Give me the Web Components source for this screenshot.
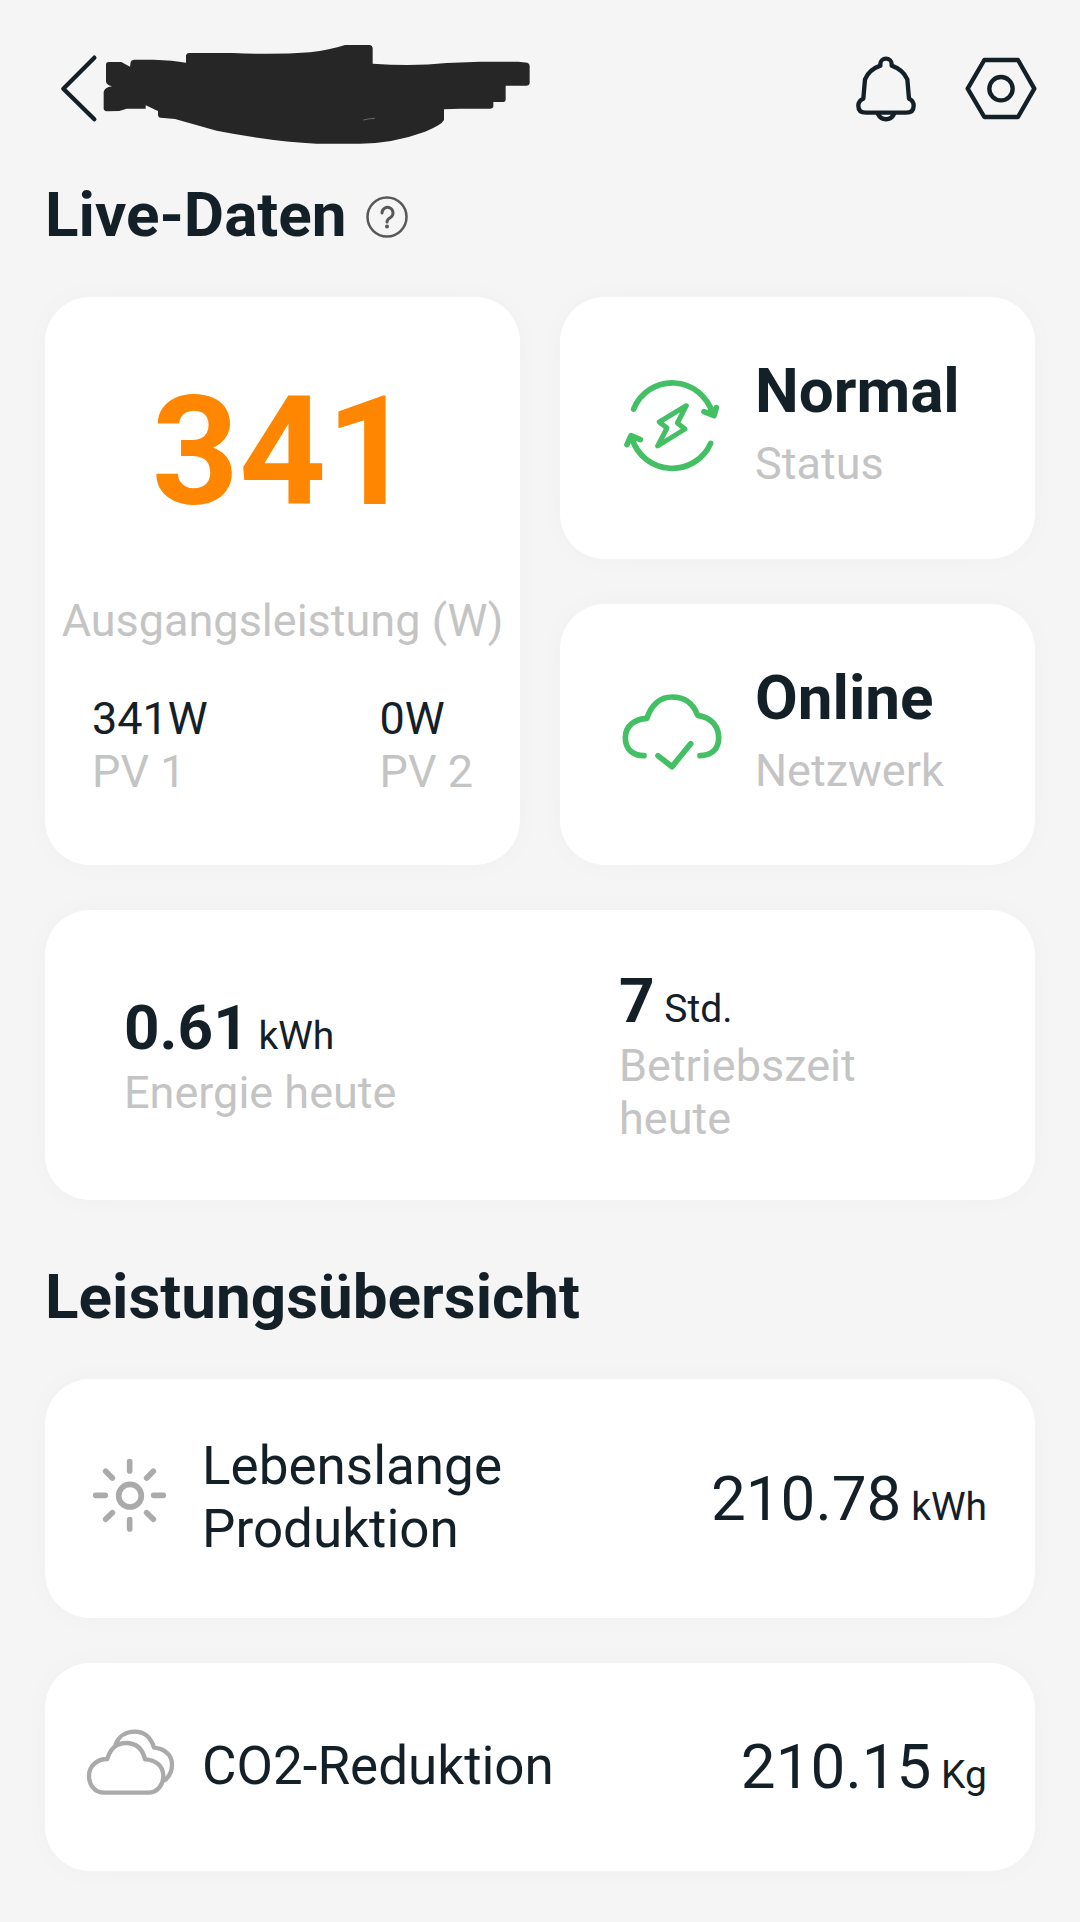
<!DOCTYPE html>
<html lang="de">
<head>
<meta charset="utf-8">
<meta name="viewport" content="width=device-width, initial-scale=1">
<title>Live-Daten</title>
<style>
  :root {
    --bg: #f5f5f5;
    --ink: #142027;
    --muted: #c4c4c4;
    --accent: #fe8600;
    --ok: #43bf64;
    --icon: #aaaaaa;
  }
  body {
    margin: 0;
    background: var(--bg);
    color: var(--ink);
    font-family: Roboto, "Liberation Sans", sans-serif;
  }
</style>
</head>
<body>
<solar-page></solar-page>

<template id="solar-page">
  <style>
    :host { display: block; padding-bottom: 50px; }
    main { display: flex; flex-direction: column; padding: 0 45px; }
    .live { display: grid; grid-template-columns: 1fr 1fr; gap: 45px 40px; margin-top: 46px; }
    .side { display: flex; flex-direction: column; gap: 45px; }
    .side > * { flex: 1; }
    .today { grid-column: 1 / -1; }
    .halves { display: grid; grid-template-columns: 1fr 1fr; align-items: center; padding: 54px 0 55px; }
    .halves > * { padding: 0 79px; }
    .overview { display: flex; flex-direction: column; gap: 45px; margin-top: 46px; }
    .second { margin-top: 60px; }
  </style>
  <app-header></app-header>
  <main>
    <section-title help>Live-Daten</section-title>
    <div class="live">
      <power-card value="341" label="Ausgangsleistung (W)">
        <pv-input value="341W" label="PV 1"></pv-input>
        <pv-input value="0W" label="PV 2"></pv-input>
      </power-card>
      <div class="side">
        <status-card icon="cycle" value="Normal" label="Status"></status-card>
        <status-card icon="online" value="Online" label="Netzwerk"></status-card>
      </div>
      <ui-card class="today">
        <div class="halves">
          <day-stat value="0.61" unit="kWh" label="Energie heute"></day-stat>
          <day-stat value="7" unit="Std." label="Betriebszeit heute"></day-stat>
        </div>
      </ui-card>
    </div>
    <section-title class="second">Leistungsübersicht</section-title>
    <div class="overview">
      <overview-row icon="sun" value="210.78" unit="kWh">Lebenslange Produktion</overview-row>
      <overview-row icon="clouds" value="210.15" unit="Kg">CO2-Reduktion</overview-row>
    </div>
  </main>
</template>

<script>
  const ICONS = {
    back: ['54 69 120 216', 13, '<path d="M163 83L70 176l93 92"/>'],
    bell: ['90 69 216 216', 13,
      '<path d="M181 107v-5a17 16 0 0 1 34 0v5Q249 119 262 148L267 206Q281 212 281 227Q281 248 258 248H138Q115 248 115 227Q115 212 130 206L135 148Q147 119 181 107"/><path d="M174 252C184 273 212 273 222 252"/>'],
    settings: ['436 69 216 216', 13,
      '<path d="M494 90H595L644 176L595 261H494L444 176Z"/><circle cx="544" cy="176" r="35"/>'],
    help: ['0 0 42 42', 3,
      '<circle cx="21" cy="21" r="19.500" stroke-width="2.500"/><path d="M16 17a5.500 5.500 0 1 1 8.500 4.500Q21 23.500 21 26"/><circle cx="21" cy="30.500" r="2" fill="currentColor" stroke="none"/>'],
    cycle: ['72 90 285 285', 17,
      '<path d="M101 180A125 125 0 0 1 337 192M312 188L342 200L349 176"/><path d="M332 283A126 126 0 0 1 96 268M81 287L93 260L121 272"/><path stroke-width="15" d="M259 170L178 219L201 237L173 291L255 240L232 222Z"/>'],
    online: ['72 80 285 285', 17,
      '<path d="M132 289C98 289 76 268 76 236C76 200 103 179 141 177C152 138 180 113 216 113C253 113 280 133 293 168C333 174 356 200 356 236C356 268 336 289 300 289"/><path d="M174 289L216 322L272 253"/>'],
    sun: ['39 93 285 285', 17,
      '<circle cx="180" cy="227" r="34"/><path d="M179 125v28M179 299v28M77 226h29M251 226h29M107 154l20 20M250 154l-20 20M107 298l20-20M250 298l-20-20"/>'],
    clouds: ['39 58 285 285', 13,
      '<path d="M102 279C74 279 57 256 57 228C57 200 80 178 112 178C120 148 140 130 168 130C198 130 218 148 225 179C258 180 280 200 280 229C280 256 262 279 234 279Z"/><path d="M137 134C146 110 168 96 194 96C224 96 243 114 252 144C284 147 306 166 306 195C306 215 298 230 285 241"/>']
  };

  const icon = name => {
    const [box, width, shapes] = ICONS[name];
    return `<svg viewBox="${box}" fill="none" stroke="currentColor" stroke-width="${width}" stroke-linecap="round" stroke-linejoin="round" aria-hidden="true">${shapes}</svg>`;
  };

  class Base extends HTMLElement {
    constructor() {
      super();
      this.attachShadow({ mode: 'open' });
    }
    connectedCallback() {
      this.shadowRoot.innerHTML = this.render();
    }
    attr(name) { return this.getAttribute(name) || ''; }
  }

  customElements.define('ui-card', class extends Base {
    render() {
      return `<style>
        :host { display: block; background: #fff; border-radius: 45px; box-shadow: 0 0 30px rgba(0, 0, 0, 0.025); }
      </style><slot></slot>`;
    }
  });

  customElements.define('app-header', class extends Base {
    render() {
      return `<style>
        :host { display: block; }
        header { display: flex; align-items: center; padding: 34px 43px 34px 58px; }
        button { display: block; border: 0; padding: 0; background: none; color: inherit; cursor: pointer; }
        svg { display: block; height: 72px; }
        .back svg { width: 40px; }
        .name { width: 450px; height: 110px; }
        nav { display: flex; gap: 43px; margin-left: auto; }
        nav svg { width: 72px; }
      </style>
      <header>
        <button class="back" type="button" aria-label="Zurück">${icon('back')}</button>
        <svg class="name" viewBox="174 12 1350 330" aria-hidden="true">
          <path fill="#262626" d="M198 104Q198 96 206 96H244L270 110L272 96Q274 90 282 89H340Q400 91 438 98V76Q440 69 448 69H580Q700 75 810 67Q870 60 915 45H990Q997 46 998 54V101Q1120 110 1220 99L1320 95H1435L1462 98Q1469 100 1469 108V160Q1468 167 1460 167H1397V210Q1396 216 1390 216H1360V230Q1358 236 1350 236H1260L1212 238V270Q1205 285 1155 305Q1060 340 960 341H830Q700 335 530 302L405 267L362 263Q354 262 354 254V243L317 226V236H260L238 243L200 244Q191 243 191 235V186Q193 173 216 169Q198 163 198 155Z"/>
          <path fill="none" stroke="#8a8a8a" stroke-width="2" d="M970 270Q985 266 1005 265"/>
        </svg>
        <nav>
          <button type="button" aria-label="Benachrichtigungen">${icon('bell')}</button>
          <button type="button" aria-label="Einstellungen">${icon('settings')}</button>
        </nav>
      </header>`;
    }
  });

  customElements.define('section-title', class extends Base {
    render() {
      const help = this.hasAttribute('help')
        ? `<button type="button" aria-label="Hilfe">${icon('help')}</button>` : '';
      return `<style>
        :host { display: flex; align-items: center; gap: 19px; }
        h2 { margin: 0; font-size: 62px; line-height: 73px; font-weight: 700; }
        button { display: block; border: 0; padding: 4px 0 0; background: none; color: #585858; cursor: pointer; }
        svg { display: block; width: 42px; height: 42px; }
      </style><h2><slot></slot></h2>${help}`;
    }
  });

  customElements.define('power-card', class extends Base {
    render() {
      return `<style>
        :host { display: block; }
        ui-card { height: 100%; }
        .body { display: flex; flex-direction: column; align-items: center; padding: 65px 0 67px; }
        .power { font-size: 152px; line-height: 180px; font-weight: 700; color: var(--accent); }
        .label { margin-top: 52px; font-size: 45px; line-height: 53px; color: var(--muted); white-space: nowrap; }
        .inputs { align-self: stretch; display: flex; justify-content: space-between; margin-top: 45px; padding: 0 47px; }
      </style>
      <ui-card><div class="body">
        <div class="power">${this.attr('value')}</div>
        <div class="label">${this.attr('label')}</div>
        <div class="inputs"><slot></slot></div>
      </div></ui-card>`;
    }
  });

  customElements.define('pv-input', class extends Base {
    render() {
      return `<style>
        :host { display: block; font-size: 45px; line-height: 53px; }
        .label { color: var(--muted); }
      </style><div>${this.attr('value')}</div><div class="label">${this.attr('label')}</div>`;
    }
  });

  customElements.define('status-card', class extends Base {
    render() {
      return `<style>
        :host { display: block; }
        ui-card { height: 100%; }
        .body { display: flex; gap: 36px; padding: 57px 20px 67px 64px; }
        svg { flex: none; align-self: center; width: 95px; height: 95px; margin-top: 9px; overflow: visible; color: var(--ok); }
        .value { font-size: 62px; line-height: 73px; font-weight: 700; }
        .label { margin-top: 10px; font-size: 45px; line-height: 53px; color: var(--muted); }
      </style>
      <ui-card><div class="body">
        ${icon(this.attr('icon'))}
        <div>
          <div class="value">${this.attr('value')}</div>
          <div class="label">${this.attr('label')}</div>
        </div>
      </div></ui-card>`;
    }
  });

  customElements.define('day-stat', class extends Base {
    render() {
      return `<style>
        :host { display: block; }
        .value { font-size: 62px; line-height: 73px; font-weight: 700; }
        .unit { font-size: 39px; line-height: 1; font-weight: 400; white-space: pre; }
        .label { margin-top: 2px; font-size: 45px; line-height: 53px; color: var(--muted); }
      </style>
      <div class="value">${this.attr('value')}<span class="unit"> ${this.attr('unit')}</span></div>
      <div class="label">${this.attr('label')}</div>`;
    }
  });

  customElements.define('overview-row', class extends Base {
    render() {
      return `<style>
        :host { display: block; }
        .body { display: flex; align-items: center; gap: 24px; padding: 56px 48px 57px 38px; }
        svg { flex: none; width: 95px; height: 95px; color: var(--icon); }
        .name { flex: 1; max-width: 400px; font-size: 53px; line-height: 63px; }
        .value { margin-left: auto; font-size: 62px; line-height: 73px; white-space: nowrap; }
        .unit { font-size: 39px; line-height: 1; white-space: pre; }
      </style>
      <ui-card><div class="body">
        ${icon(this.attr('icon'))}
        <div class="name"><slot></slot></div>
        <div class="value">${this.attr('value')}<span class="unit"> ${this.attr('unit')}</span></div>
      </div></ui-card>`;
    }
  });

  customElements.define('solar-page', class extends HTMLElement {
    constructor() {
      super();
      this.attachShadow({ mode: 'open' })
        .append(document.getElementById('solar-page').content.cloneNode(true));
    }
  });
</script>
</body>
</html>
